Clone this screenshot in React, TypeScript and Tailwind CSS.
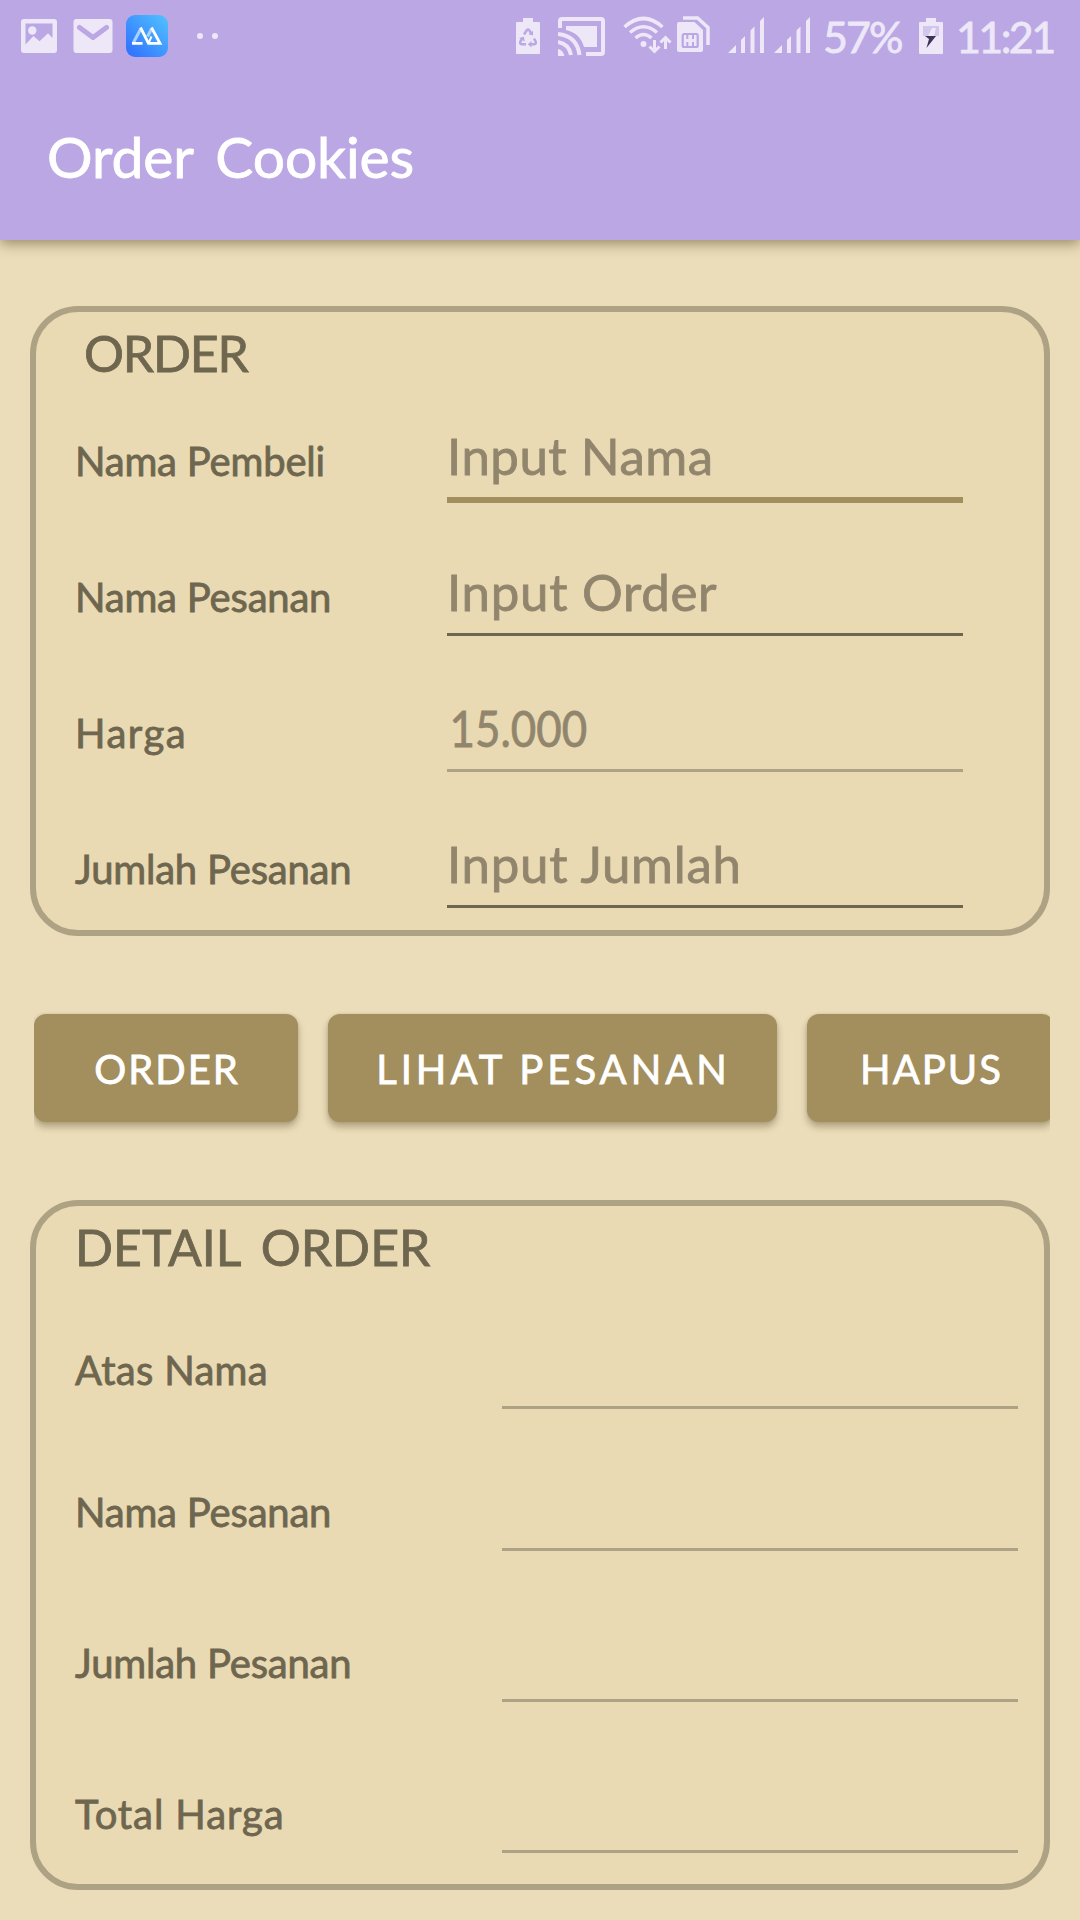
import React from "react";

const ICON = "#ede7f8";
const BAR = "#baa7e4";

function PictureIcon() {
  return (
    <svg className="ml-[21px] mt-[19px] shrink-0" width="36" height="34" viewBox="0 0 36 34">
      <rect width="36" height="34" rx="3" fill={ICON} />
      <path d="M4.5 4.5h27V19L27 14.3l-8.5 8L12.500 17l-8 8.500z" fill={BAR} />
      <circle cx="11.300" cy="11.500" r="4.200" fill={ICON} />
    </svg>
  );
}

function MailIcon() {
  return (
    <svg className="ml-[16px] mt-[19px] shrink-0" width="40" height="34" viewBox="0 0 40 34">
      <rect x="0.500" width="39" height="34" rx="3" fill={ICON} />
      <path d="M6.500 8.500L20 18.500 33.500 8.500" fill="none" stroke={BAR} strokeWidth="5" strokeLinecap="round" strokeLinejoin="round" />
    </svg>
  );
}

function AppBadge() {
  return (
    <svg className="ml-[13px] mt-[15px] shrink-0" width="42" height="42" viewBox="0 0 42 42">
      <defs>
        <linearGradient id="badge" x1="0" y1="1" x2="1" y2="0">
          <stop offset="0" stopColor="#2e6dff" />
          <stop offset="1" stopColor="#52c3ff" />
        </linearGradient>
      </defs>
      <rect width="42" height="42" rx="9" fill="url(#badge)" />
      <path d="M7.500 27.500L15 13.500M21.500 21.500L25.500 14" fill="none" stroke="#a9d3ff" strokeWidth="3" />
      <path d="M14.500 12.500L22.500 28.300H34L25.500 12.500M6 28.300H16.500" fill="none" stroke="#fff" strokeWidth="2.800" />
      <path d="M22.500 28L25.500 21.500" fill="none" stroke="#fff" strokeWidth="2" />
    </svg>
  );
}

function BatterySaverIcon() {
  return (
    <svg className="mt-[18px] shrink-0" width="24" height="36" viewBox="0 0 24 36">
      <path d="M7 0h10v4h6q1 0 1 1v30q0 1-1 1H1q-1 0-1-1V5q0-1 1-1h6z" fill={ICON} />
      <g fill="none" stroke={BAR} strokeWidth="2.500">
        <path d="M8 16.500l2.800-4.300q1.200-1.400 2.400 0l1.800 3" />
        <path d="M18 20.500l1.700 3.200q.6 2.400-1.700 2.600h-3" />
        <path d="M10 26.300H5.800q-2.300-.4-1.500-2.500l1.500-2.600" />
      </g>
      <path d="M17 12.800v4.700l-4.600-1.200zM15.500 23v6.600l-3.700-3.300zM3 20l4.800-1.300 1 4.800z" fill={BAR} />
    </svg>
  );
}

function CastIcon() {
  return (
    <svg className="ml-[18px] mt-[17px] shrink-0" width="47" height="39" viewBox="0 0 47 39">
      <path d="M2 11V4q0-2 2-2h39q2 0 2 2v31q0 2-2 2H28" fill="none" stroke={ICON} strokeWidth="4" />
      <path d="M8 9h31v21H26Q22 16 8 13z" fill={ICON} />
      <path d="M0 17q19 2 21.500 21M0 25q11 2 13 13" fill="none" stroke={ICON} strokeWidth="4" />
      <path d="M0 32q5 1 6.500 7H0z" fill={ICON} />
    </svg>
  );
}

function WifiIcon() {
  return (
    <svg className="ml-[18px] mt-[16px] shrink-0" width="49" height="38" viewBox="0 0 49 38">
      <g fill="none" stroke={ICON} strokeWidth="3.600">
        <path d="M1.500 11Q20.500-6 39.500 11" />
        <path d="M7 16.500Q20.500 5 34 16.500" />
        <path d="M12.500 22Q20.500 15 28.500 22" />
      </g>
      <circle cx="20.500" cy="28" r="3" fill={ICON} />
      <path d="M31.500 24v9M26.500 30.500l5 5 5-5M42.500 33v-10M37.500 26.500l5-5 5 5" fill="none" stroke={ICON} strokeWidth="3" />
    </svg>
  );
}

function SimIcon() {
  return (
    <svg className="ml-[5px] mt-[16px] shrink-0" width="33" height="36" viewBox="0 0 33 36">
      <path d="M6 2h14.500L31 11.500V29" fill="none" stroke={ICON} strokeWidth="3.500" />
      <path d="M2 6h15.500L26 14v20q0 2-2 2H2q-2 0-2-2V8q0-2 2-2z" fill={ICON} />
      <rect x="5.700" y="18" width="15" height="13" rx="1.500" fill="none" stroke={BAR} strokeWidth="2.200" />
      <path d="M10.300 18v5M16 18v5M10.300 26v5M16 26v5" stroke={BAR} strokeWidth="2" />
    </svg>
  );
}

function SignalIcon({ className }: { className: string }) {
  return (
    <svg className={className} width="36" height="36" viewBox="0 0 36 36">
      <path d="M0 36l8-8v8zM13 36V23l4-4v17zM22.500 36V13.500l4-4V36zM32 36V4l4-4v36z" fill={ICON} />
    </svg>
  );
}

function ChargingIcon() {
  return (
    <svg className="mt-[18px] shrink-0" width="24" height="36" viewBox="0 0 24 36">
      <path d="M7 0h10v4h6q1 0 1 1v30q0 1-1 1H1q-1 0-1-1V5q0-1 1-1h6z" fill={ICON} />
      <path d="M4 8h16v10H4z" fill="#d2c6ed" />
      <path d="M13 10h4l-2 8H9z" fill={ICON} />
      <path d="M6 18h11l-9.500 12 2.500-9z" fill="#3d3455" />
    </svg>
  );
}

function StatusBar() {
  return (
    <div className="flex h-[73px] items-start text-[#ede7f8]">
      <PictureIcon />
      <MailIcon />
      <AppBadge />
      <div className="ml-[29px] mt-[33px] flex gap-[9px]">
        <span className="size-1.5 rounded-full bg-[#ede7f8]" />
        <span className="size-1.5 rounded-full bg-[#ede7f8]" />
      </div>
      <div className="ml-auto flex w-[564px] items-start">
        <BatterySaverIcon />
        <CastIcon />
        <WifiIcon />
        <SimIcon />
        <SignalIcon className="ml-[18px] mt-[17px] shrink-0" />
        <SignalIcon className="ml-[10px] mt-[17px] shrink-0" />
        <span className="ml-[13px] mt-[7px] w-[96px] whitespace-nowrap text-[43px] leading-[60px] tracking-[-2px]">57%</span>
        <ChargingIcon />
        <span className="ml-[13px] mt-[7px] whitespace-nowrap text-[43px] leading-[60px] tracking-[-2.6px]">11:21</span>
      </div>
    </div>
  );
}

type RowData = {
  label: string;
  labelSpacing: string;
  height: string;
  line: string;
  value?: string;
  valueSpacing?: string;
};

const orderRows: RowData[] = [
  { label: "Nama Pembeli", labelSpacing: "tracking-[-0.2px]", height: "h-[115px]", line: "h-1.5 bg-[#a38e5d]", value: "Input Nama", valueSpacing: "tracking-[0.5px]" },
  { label: "Nama Pesanan", labelSpacing: "tracking-[-0.2px]", height: "h-[136px]", line: "h-[3px] bg-[#6e664f]", value: "Input Order", valueSpacing: "tracking-[0.7px]" },
  { label: "Harga", labelSpacing: "tracking-[1.5px]", height: "h-[136px]", line: "h-[3px] bg-[#aea285]", value: "15.000", valueSpacing: "origin-left scale-x-[0.86] pl-[3px]" },
  { label: "Jumlah Pesanan", labelSpacing: "tracking-[-0.2px]", height: "h-[136px]", line: "h-[3px] bg-[#6e664f]", value: "Input Jumlah", valueSpacing: "tracking-[0.7px]" },
];

const detailRows: RowData[] = [
  { label: "Atas Nama", labelSpacing: "tracking-[0.3px]", height: "h-[130px]", line: "h-[3px] bg-[#aea285]" },
  { label: "Nama Pesanan", labelSpacing: "tracking-[-0.2px]", height: "h-[142px]", line: "h-[3px] bg-[#aea285]" },
  { label: "Jumlah Pesanan", labelSpacing: "tracking-[-0.2px]", height: "h-[151px]", line: "h-[3px] bg-[#aea285]" },
  { label: "Total Harga", labelSpacing: "tracking-[0.9px]", height: "h-[151px]", line: "h-[3px] bg-[#aea285]" },
];

function Row({ row, labelWidth }: { row: RowData; labelWidth: string }) {
  return (
    <div className={`flex items-end ${row.height}`}>
      <div className={`${labelWidth} ${row.labelSpacing} mb-[12px] shrink-0 whitespace-nowrap text-[40px] leading-[60px]`}>
        {row.label}
      </div>
      <div className="w-[516px] text-[51px] leading-[60px] text-[#91866d]">
        <div className={`h-[71px] whitespace-nowrap ${row.valueSpacing ?? ""}`}>{row.value}</div>
        <div className="h-1.5">
          <div className={row.line} />
        </div>
      </div>
    </div>
  );
}

function Button({ children, className }: { children: string; className: string }) {
  return (
    <button className={`${className} h-[108px] shrink-0 whitespace-nowrap rounded-xl bg-[#a38e5d] pl-[2px] pt-0.5 text-[40px] leading-[60px] text-white shadow-[0_5px_7px_rgba(60,45,10,0.32),0_0_3px_rgba(60,45,10,0.15)]`}>
      {children}
    </button>
  );
}

export default function App() {
  return (
    <div className="flex h-[1920px] w-[1080px] flex-col overflow-hidden bg-[#ebddba] font-['Lato',sans-serif] text-[#6e664f] [-webkit-text-stroke:0.8px_currentColor]">
      <header className="h-[240px] shrink-0 bg-[#baa7e4] shadow-[0_4px_12px_rgba(60,45,10,0.45)]">
        <StatusBar />
        <h1 className="ml-[47px] mt-[45px] whitespace-nowrap text-[57px] leading-[76px] tracking-[-0.1px] [word-spacing:8px] text-white">Order Cookies</h1>
      </header>

      <section className="mx-[30px] mt-[66px] h-[630px] shrink-0 rounded-[48px] border-6 border-[#aea285] bg-[#e9dab3] pl-[39px]">
        <h2 className="h-[76px] pl-[9px] pt-[3px] text-[50px] leading-[76px] tracking-[-1.2px]">ORDER</h2>
        {orderRows.map((row) => (
          <Row key={row.label} row={row} labelWidth="w-[372px]" />
        ))}
      </section>

      <div className="ml-[34px] mr-[30px] mt-[66px] flex h-[132px] shrink-0 gap-[30px] overflow-hidden pt-3">
        <Button className="w-[264px] tracking-[2px]">ORDER</Button>
        <Button className="w-[449px] tracking-[4px]">LIHAT PESANAN</Button>
        <Button className="w-[247px] tracking-[2px]">HAPUS</Button>
      </div>

      <section className="mx-[30px] mt-[66px] h-[690px] shrink-0 rounded-[48px] border-6 border-[#aea285] bg-[#e9dab3] pl-[39px]">
        <h2 className="h-[76px] pt-[3px] text-[50px] leading-[76px] tracking-[0px] [word-spacing:8px]">DETAIL ORDER</h2>
        {detailRows.map((row) => (
          <Row key={row.label} row={row} labelWidth="w-[427px]" />
        ))}
      </section>
    </div>
  );
}
